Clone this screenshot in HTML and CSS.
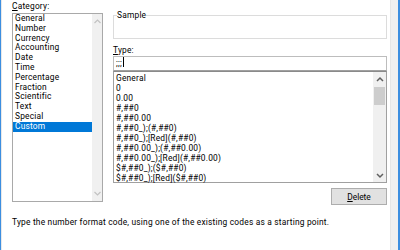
FILE: index.html
```html
<!DOCTYPE html>
<html>
<head>
<meta charset="utf-8">
<link rel="stylesheet" href="styles.css">
</head>
<body>
<div class="frame">
  <div class="edge-left"></div>
  <div class="main">
    <div class="cols">
      <div class="cat-col">
        <div class="label"><u>C</u>ategory:</div>
        <div class="listbox cat-list">
          <div class="items">
            <div class="item">General</div>
            <div class="item">Number</div>
            <div class="item">Currency</div>
            <div class="item">Accounting</div>
            <div class="item">Date</div>
            <div class="item">Time</div>
            <div class="item">Percentage</div>
            <div class="item">Fraction</div>
            <div class="item">Scientific</div>
            <div class="item">Text</div>
            <div class="item">Special</div>
            <div class="item selected">Custom</div>
          </div>
          <div class="scrollbar cat-scroll">
            <svg class="arrow" width="9" height="9" viewBox="0 0 9 9"><path d="M1.5 6 L4.5 3 L7.5 6" fill="none" stroke="#c2c2c2" stroke-width="1.2"/></svg>
            <div class="track"></div>
            <svg class="arrow" width="9" height="9" viewBox="0 0 9 9"><path d="M1.5 3 L4.5 6 L7.5 3" fill="none" stroke="#c2c2c2" stroke-width="1.2"/></svg>
          </div>
        </div>
      </div>
      <div class="right-col">
        <fieldset class="sample">
          <legend>Sample</legend>
        </fieldset>
        <div class="label type-label"><u>T</u>ype:</div>
        <div class="type-input">;;;<span class="caret"></span></div>
        <div class="listbox type-list">
          <div class="items">
            <div class="item">General</div>
            <div class="item">0</div>
            <div class="item">0.00</div>
            <div class="item">#,##0</div>
            <div class="item">#,##0.00</div>
            <div class="item">#,##0_);(#,##0)</div>
            <div class="item">#,##0_);[Red](#,##0)</div>
            <div class="item">#,##0.00_);(#,##0.00)</div>
            <div class="item">#,##0.00_);[Red](#,##0.00)</div>
            <div class="item">$#,##0_);($#,##0)</div>
            <div class="item">$#,##0_);[Red]($#,##0)</div>
          </div>
          <div class="scrollbar type-scroll">
            <svg class="arrow" width="12" height="9" viewBox="0 0 12 9"><path d="M3 6 L6 3 L9 6" fill="none" stroke="#606060" stroke-width="1.5"/></svg>
            <div class="track"><div class="thumb"></div></div>
            <svg class="arrow" width="12" height="9" viewBox="0 0 12 9"><path d="M3 3 L6 6 L9 3" fill="none" stroke="#606060" stroke-width="1.5"/></svg>
          </div>
        </div>
        <div class="btn-row">
          <button class="btn"><u>D</u>elete</button>
        </div>
      </div>
    </div>
    <div class="hint">Type the number format code, using one of the existing codes as a starting point.</div>
  </div>
  <div class="edge-right"></div>
</div>
</body>
</html>
```
FILE: styles.css
```css
html, body {
  margin: 0;
  padding: 0;
  background: #ffffff;
}
body {
  width: 400px;
  height: 250px;
  overflow: hidden;
  font-family: Roboto, "Noto Sans", sans-serif;
  font-size: 8.4px;
  letter-spacing: 0.2px;
  color: #000;
}
.frame {
  display: flex;
  width: 400px;
  height: 250px;
}
.edge-left {
  width: 1px;
  background: #3c8ee0;
  border-right: 1px solid #e8e8e8;
}
.main {
  flex: 1;
  padding: 2px 0 0 10px;
  display: flex;
  flex-direction: column;
}
.cols {
  display: flex;
  gap: 10px;
}
.cat-col {
  width: 91px;
  display: flex;
  flex-direction: column;
}
.label {
  height: 11px;
  line-height: 9px;
}
.listbox {
  border: 1px solid #a9a9a9;
  display: flex;
  background: #fff;
}
.items {
  flex: 1;
}
.item {
  height: 9.8px;
  line-height: 9.8px;
  padding-left: 2px;
  white-space: nowrap;
}
.item.selected {
  background: #0078d7;
  color: #fff;
}
.cat-list {
  height: 187px;
}
.scrollbar {
  display: flex;
  flex-direction: column;
  align-items: center;
  background: #f0f0f0;
}
.cat-scroll {
  width: 10px;
}
.track {
  flex: 1;
  width: 100%;
}
.arrow {
  display: block;
  margin: 3px 0;
}
.right-col {
  width: 274px;
  display: flex;
  flex-direction: column;
}
.sample {
  margin: 10px 0 0 0;
  padding: 0;
  height: 27px;
  border: 1px solid #dcdcdc;
  box-sizing: border-box;
}
.sample legend {
  padding: 0;
  margin-left: 3px;
  line-height: 6px;
}
.type-label {
  margin-top: 7px;
  height: 10px;
}
.type-input {
  line-height: 13px;
  border: 1px solid #bdbdbd;
  border-bottom: 1px solid #a0a0a0;
  padding-left: 2px;
  box-sizing: border-box;
  height: 15px;
}
.caret {
  display: inline-block;
  width: 1px;
  height: 10px;
  background: #000;
  vertical-align: -1px;
  margin-left: 1px;
}
.type-list {
  height: 112px;
  box-sizing: border-box;
  border-color: #a0a0a0;
  border-top-color: #8a8a8a;
}
.type-list .items {
  padding-top: 1px;
}
.type-list .item {
  height: 10px;
  line-height: 10px;
}
.type-scroll {
  width: 13px;
}
.type-scroll .arrow {
  margin: 3px 0 2px;
}
.type-scroll .track {
  display: flex;
  flex-direction: column;
}
.thumb {
  margin: 1px 1px 0;
  height: 18px;
  background: #cdcdcd;
}
.btn-row {
  display: flex;
  justify-content: flex-end;
  margin-top: 5px;
}
.btn {
  width: 56px;
  height: 17px;
  padding: 0;
  margin: 0;
  font: inherit;
  color: #000;
  background: #e1e1e1;
  border: 1px solid #adadad;
  box-sizing: border-box;
}
.hint {
  margin-top: 12px;
  line-height: 10px;
  white-space: nowrap;
}
.edge-right {
  width: 7px;
  background: #f0f0f0;
  border-left: 1px solid #e6e6e6;
  border-right: 2px solid #3c8ee0;
  margin-left: 3px;
}
```
